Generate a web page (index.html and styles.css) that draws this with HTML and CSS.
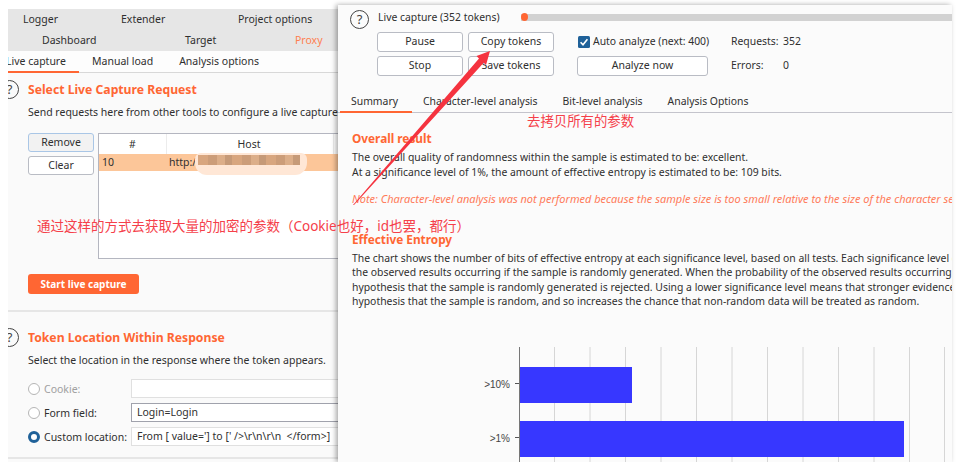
FILE: index.html
```html
<!DOCTYPE html>
<html lang="en">
<head>
    <meta charset="UTF-8">
    <title>Sequencer live capture</title>
    <link rel="stylesheet" href="styles.css">
</head>
<body>
    <div class="left-pane">
        <div class="nav-row nav-top">
            <span>Logger</span><span>Extender</span><span>Project options</span>
        </div>
        <div class="nav-row nav-bottom">
            <span>Dashboard</span><span>Target</span><span class="nav-active">Proxy</span>
        </div>
        <div class="sub-tabs">
            <span class="sub-tab sub-tab-active">Live capture</span>
            <span class="sub-tab">Manual load</span>
            <span class="sub-tab">Analysis options</span>
        </div>

        <div class="section section-request">
            <span class="help-icon help-clipped">?</span>
            <h2>Select Live Capture Request</h2>
            <p class="section-text">Send requests here from other tools to configure a live capture.</p>
            <div class="request-row">
                <div class="request-buttons">
                    <button class="btn btn-focus">Remove</button>
                    <button class="btn">Clear</button>
                </div>
                <div class="request-table">
                    <div class="table-head">
                        <span class="col-num">#</span>
                        <span class="col-host">Host</span>
                    </div>
                    <div class="table-row">
                        <span class="col-num">10</span>
                        <span class="col-host-value">http:/</span>
                        <span class="blur-mark"></span>
                    </div>
                </div>
            </div>
            <button class="btn-start">Start live capture</button>
        </div>

        <div class="section section-location">
            <span class="help-icon help-clipped">?</span>
            <h2>Token Location Within Response</h2>
            <p class="section-text">Select the location in the response where the token appears.</p>
            <div class="location-row location-off">
                <span class="radio"></span><label>Cookie:</label>
                <span class="field"></span>
            </div>
            <div class="location-row">
                <span class="radio"></span><label>Form field:</label>
                <span class="field field-strong">Login=Login</span>
            </div>
            <div class="location-row">
                <span class="radio radio-on"></span><label>Custom location:</label>
                <span class="field">From [ value='] to [' /&gt;\r\n\r\n &nbsp;&lt;/form&gt;]</span>
            </div>
        </div>
    </div>

    <div class="right-pane">
        <div class="capture-head">
            <span class="help-icon help-main">?</span>
            <span class="capture-title">Live capture (352 tokens)</span>
            <div class="progress"><span class="progress-dot"></span></div>
        </div>
        <div class="controls">
            <div class="btn-grid">
                <button class="btn">Pause</button>
                <button class="btn">Copy tokens</button>
                <button class="btn">Stop</button>
                <button class="btn">Save tokens</button>
            </div>
            <div class="auto-box">
                <div class="auto-line">
                    <svg class="checkbox" viewBox="0 0 12 12"><rect width="12" height="12" rx="1.5" fill="#1f6199"/><path d="M2.6 6.2 5 8.8 9.4 3.2" fill="none" stroke="#fff" stroke-width="1.6"/></svg>
                    <span>Auto analyze (next: 400)</span>
                </div>
                <button class="btn btn-wide">Analyze now</button>
            </div>
            <div class="stats">
                <span>Requests:</span><span>352</span>
                <span>Errors:</span><span>0</span>
            </div>
        </div>
        <div class="result-tabs">
            <span class="result-tab result-tab-active">Summary</span>
            <span class="result-tab">Character-level analysis</span>
            <span class="result-tab">Bit-level analysis</span>
            <span class="result-tab">Analysis Options</span>
        </div>
        <div class="result-body">
            <h3>Overall result</h3>
            <p>The overall quality of randomness within the sample is estimated to be: excellent.</p>
            <p>At a significance level of 1%, the amount of effective entropy is estimated to be: 109 bits.</p>
            <p class="note">Note: Character-level analysis was not performed because the sample size is too small relative to the size of the character set</p>
            <h3 class="entropy-title">Effective Entropy</h3>
            <p>The chart shows the number of bits of effective entropy at each significance level, based on all tests. Each significance level defines</p>
            <p>the observed results occurring if the sample is randomly generated. When the probability of the observed results occurring</p>
            <p>hypothesis that the sample is randomly generated is rejected. Using a lower significance level means that stronger evidence</p>
            <p>hypothesis that the sample is random, and so increases the chance that non-random data will be treated as random.</p>
        </div>
        <svg class="chart" viewBox="0 0 614 116">
            <g stroke="#d6d6d6" stroke-width="1">
                <path d="M216.5 0V116M252 0V116M287.5 0V116M323 0V116M358.5 0V116M394 0V116M429.5 0V116M465 0V116M500.5 0V116M536 0V116M571.5 0V116M606.5 0V116"/>
            </g>
            <path d="M181.5 0V116" stroke="#777" fill="none"/>
            <path d="M177 36.5H181M177 90.5H181" stroke="#555" fill="none"/>
            <rect x="182" y="20" width="112" height="36" fill="#3737ff"/>
            <rect x="182" y="74" width="384" height="36" fill="#3737ff"/>
            <text x="172" y="41" class="chart-label">&gt;10%</text>
            <text x="172" y="95" class="chart-label">&gt;1%</text>
        </svg>
    </div>

    <svg class="arrow" viewBox="0 0 956 462"><polygon points="353,205 479,58.5 476.5,56 490,51 486,65 483.7,62.8 354,205" fill="#f5333f"/></svg>
    <div class="note-red note-copy">去拷贝所有的参数</div>
    <div class="note-red note-method">通过这样的方式去获取大量的加密的参数（Cookie也好，id也罢，都行）</div>
</body>
</html>
```

FILE: styles.css
```css
* {
    margin: 0;
    padding: 0;
    box-sizing: border-box;
}

body {
    width: 956px;
    height: 462px;
    overflow: hidden;
    display: flex;
    align-items: flex-start;
    background-color: #ffffff;
    color: #2f2f2f;
    font-family: "Noto Sans", "Noto Sans CJK SC", sans-serif;
    font-size: 10.5px;
    position: relative;
}

.left-pane {
    width: 330px;
    height: 453px;
    margin: 9px 0 0 8px;
    background-color: #fafafa;
    overflow: hidden;
    flex-shrink: 0;
}

.nav-row {
    display: grid;
    height: 21px;
    line-height: 20px;
    background-color: #e6e6e6;
}

.nav-top {
    grid-template-columns: 98px 117px auto;
    padding-left: 15px;
}

.nav-bottom {
    grid-template-columns: 143px 110px auto;
    padding-left: 34px;
}

.nav-active {
    color: #ff7f50;
}

.sub-tabs {
    display: flex;
    height: 22px;
    border-bottom: 1px solid #d8d8d8;
    background-color: #fdfdfd;
}

.sub-tab {
    line-height: 20px;
    margin-left: 26px;
}

.sub-tab-active {
    width: 71px;
    margin-left: 0;
    text-indent: -2px;
    border-bottom: 2px solid #ff6633;
    height: 22px;
}

.sub-tab-active + .sub-tab {
    margin-left: 13px;
}

.section {
    position: relative;
    padding-left: 20px;
}

.section h2 {
    font-size: 12.2px;
    font-weight: 700;
    color: #ff6633;
    line-height: 18px;
}

.section-request {
    height: 239px;
    padding-top: 8px;
    border-bottom: 2px solid #e6e6e6;
}

.section-location {
    height: 147px;
    padding-top: 17px;
    border-bottom: 2px solid #e6e6e6;
}

.section-text {
    margin-top: 4px;
    line-height: 18px;
    white-space: nowrap;
}

.help-icon {
    display: block;
    width: 19px;
    height: 19px;
    line-height: 17px;
    border: 1.5px solid #444;
    border-radius: 50%;
    text-align: center;
    font-size: 13px;
    color: #444;
    flex-shrink: 0;
}

.help-clipped {
    position: absolute;
    left: -8px;
    top: 7px;
}

.section-location .help-clipped {
    top: 16px;
}

.help-main {
    margin: 4px 0 0 -1px;
}

.request-row {
    display: flex;
    gap: 4px;
    margin-top: 12px;
    width: 320px;
}

.request-buttons {
    display: flex;
    flex-direction: column;
    gap: 4px;
}

.btn {
    height: 19px;
    width: 66px;
    padding-bottom: 2px;
    background-color: #ffffff;
    border: 1px solid #b9bcc4;
    border-radius: 3px;
    font-family: inherit;
    font-size: 10.5px;
    color: #2f2f2f;
}

.btn-focus {
    background-color: #f2f2f2;
    border-color: #a9c6e6;
}

.request-table {
    width: 240px;
    height: 126px;
    background-color: #ffffff;
    border: 1px solid #b4b6c0;
    border-right: none;
}

.table-head {
    display: flex;
    height: 20px;
    line-height: 21px;
}

.col-num {
    width: 67px;
    text-align: center;
}

.col-host {
    flex: 1;
    text-align: center;
    padding-right: 2px;
    border-left: 1px solid #ececec;
    margin-right: 4px;
    border-right: 1px solid #ececec;
}

.table-row {
    display: flex;
    position: relative;
    height: 17px;
    line-height: 16px;
    background-color: #fcc699;
}

.table-row .col-num {
    width: 70px;
    padding-left: 3px;
    text-align: left;
}

.blur-mark {
    position: absolute;
    left: 96px;
    top: -1px;
    width: 112px;
    height: 22px;
    border-radius: 6px 6px 12px 12px;
    background-color: #ffe7d6;
}

.blur-mark::before {
    content: "";
    position: absolute;
    left: 3px;
    top: 2px;
    width: 102px;
    height: 10px;
    background: repeating-linear-gradient(90deg, #d8a67f 0 10px, #cc9d79 10px 19px, #dcae89 19px 27px, #c69a78 27px 34px);
}

.btn-start {
    display: block;
    width: 111px;
    height: 20px;
    margin-top: 15px;
    padding-bottom: 1px;
    border: none;
    border-radius: 3px;
    background-color: #ff6633;
    color: #ffffff;
    font-family: inherit;
    font-size: 10px;
    font-weight: 700;
}

.location-row {
    display: flex;
    align-items: center;
    height: 19px;
    margin-top: 5px;
}

.section-text + .location-row {
    margin-top: 10px;
}

.location-row label {
    width: 87px;
    white-space: nowrap;
    margin-left: 4px;
}

.location-off {
    color: #a0a0a0;
}

.radio {
    width: 12px;
    height: 12px;
    border: 1px solid #b5b5b5;
    border-radius: 50%;
    background-color: #ffffff;
    flex-shrink: 0;
}

.radio-on {
    border: 3.5px solid #1f6199;
}

.field {
    flex: 1;
    height: 19px;
    line-height: 17px;
    padding-left: 5px;
    background-color: #ffffff;
    border: 1px solid #e0e0e0;
    border-right: none;
    white-space: nowrap;
}

.field-strong {
    border-color: #a0a2ac;
}

.right-pane {
    width: 614px;
    height: 457px;
    margin-top: 5px;
    background-color: #fbfbfb;
    box-shadow: -2px 0 5px rgba(0, 0, 0, 0.35);
    font-size: 10.4px;
    overflow: hidden;
    position: relative;
    flex-shrink: 0;
}

.capture-head {
    display: flex;
    align-items: center;
    height: 22px;
    margin-top: 1px;
    padding-left: 13px;
}

.capture-title {
    margin-left: 9px;
    width: 143px;
    white-space: nowrap;
}

.progress {
    position: relative;
    width: 431px;
    height: 7px;
    background-color: #d2d2d2;
}

.progress-dot {
    position: absolute;
    left: 0;
    top: -0.5px;
    width: 7px;
    height: 8px;
    border-radius: 50%;
    background-color: #ff6633;
}

.controls {
    display: flex;
    margin: 4px 0 0 39px;
}

.btn-grid {
    display: grid;
    grid-template-columns: 86px 86px;
    gap: 4px 5px;
}

.btn-grid .btn {
    width: 86px;
    height: 20px;
}

.auto-box {
    width: 131px;
    margin-left: 23px;
}

.auto-line {
    display: flex;
    align-items: center;
    gap: 3px;
    height: 20px;
    margin-bottom: 4px;
    padding-bottom: 2px;
    white-space: nowrap;
}

.checkbox {
    width: 12px;
    height: 12px;
    margin: 2px 0 0 1px;
    flex-shrink: 0;
}

.btn-wide {
    width: 131px;
    height: 20px;
}

.stats {
    display: grid;
    grid-template-columns: 52px auto;
    grid-auto-rows: 20px;
    row-gap: 4px;
    line-height: 18px;
    margin-left: 23px;
}

.result-tabs {
    display: flex;
    height: 25px;
    margin-top: 12px;
    line-height: 26px;
    border-bottom: 1px solid #c4c4cc;
}

.result-tab {
    margin-left: 25px;
    white-space: nowrap;
}

.result-tab-active {
    width: 72px;
    height: 25px;
    margin-left: 2px;
    padding-left: 11px;
    border-bottom: 2px solid #ff6633;
}

.result-tab-active + .result-tab {
    margin-left: 11px;
}

.result-body {
    padding: 16px 0 0 14px;
    line-height: 14.5px;
    white-space: nowrap;
}

.result-body h3 {
    font-size: 11.8px;
    font-weight: 700;
    color: #ff6633;
    line-height: 18px;
    margin-bottom: 3px;
}

.note {
    margin-top: 13px;
    font-size: 11px;
    font-style: italic;
    color: #ff7a59;
}

.result-body .entropy-title {
    margin-top: 23px;
}

.chart {
    display: block;
    width: 614px;
    height: 116px;
    margin-top: 38px;
}

.chart-label {
    font-family: "Liberation Sans", sans-serif;
    font-size: 10px;
    fill: #444;
    text-anchor: end;
}

.arrow {
    position: absolute;
    left: 0;
    top: 0;
    width: 956px;
    height: 462px;
    pointer-events: none;
}

.note-red {
    position: absolute;
    color: #f5404a;
    white-space: nowrap;
    line-height: 18px;
}

.note-copy {
    left: 527px;
    top: 112px;
    font-size: 13.4px;
}

.note-method {
    left: 37px;
    top: 217px;
    font-size: 13.5px;
}
```
